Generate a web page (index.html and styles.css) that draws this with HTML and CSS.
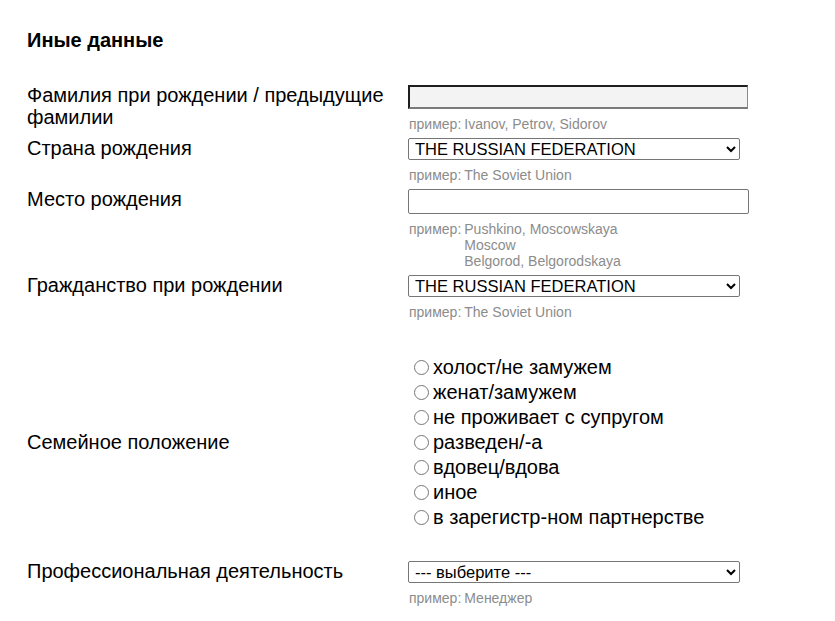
FILE: index.html
```html
<!DOCTYPE html>
<html lang="ru">
<head>
<meta charset="utf-8">
<title>Иные данные</title>
<link rel="stylesheet" href="styles.css">
</head>
<body>
<div class="page">
  <h2 class="title">Иные данные</h2>
  <div class="form">
    <div class="label">Фамилия при рождении / предыдущие фамилии</div>
    <div class="field">
      <input class="text text-prev" type="text">
      <div class="hint"><span class="hint-key">пример:</span><span class="hint-val">Ivanov, Petrov, Sidorov</span></div>
    </div>

    <div class="label">Страна рождения</div>
    <div class="field">
      <select class="sel"><option>THE RUSSIAN FEDERATION</option></select>
      <div class="hint"><span class="hint-key">пример:</span><span class="hint-val">The Soviet Union</span></div>
    </div>

    <div class="label">Место рождения</div>
    <div class="field">
      <input class="text" type="text">
      <div class="hint"><span class="hint-key">пример:</span><span class="hint-val">Pushkino, Moscowskaya<br>Moscow<br>Belgorod, Belgorodskaya</span></div>
    </div>

    <div class="label">Гражданство при рождении</div>
    <div class="field">
      <select class="sel"><option>THE RUSSIAN FEDERATION</option></select>
      <div class="hint"><span class="hint-key">пример:</span><span class="hint-val">The Soviet Union</span></div>
    </div>

    <div class="label label-mid">Семейное положение</div>
    <div class="field field-radios">
      <label class="opt"><input type="radio" name="fam"><span>холост/не замужем</span></label>
      <label class="opt"><input type="radio" name="fam"><span>женат/замужем</span></label>
      <label class="opt"><input type="radio" name="fam"><span>не проживает с супругом</span></label>
      <label class="opt"><input type="radio" name="fam"><span>разведен/-а</span></label>
      <label class="opt"><input type="radio" name="fam"><span>вдовец/вдова</span></label>
      <label class="opt"><input type="radio" name="fam"><span>иное</span></label>
      <label class="opt"><input type="radio" name="fam"><span>в зарегистр-ном партнерстве</span></label>
    </div>

    <div class="label">Профессиональная деятельность</div>
    <div class="field">
      <select class="sel"><option>--- выберите ---</option></select>
      <div class="hint"><span class="hint-key">пример:</span><span class="hint-val">Менеджер</span></div>
    </div>
  </div>
</div>
</body>
</html>
```
FILE: styles.css
```css
html, body {
  margin: 0;
  padding: 0;
  background: #fff;
}
body {
  font-family: "Liberation Sans", Arial, sans-serif;
  color: #000;
}
.page {
  padding: 29px 0 0 27px;
}
.title {
  margin: 0;
  font-size: 20px;
  font-weight: bold;
  line-height: 22px;
}
.form {
  margin-top: 33px;
  display: grid;
  grid-template-columns: 381px 400px;
  row-gap: 5px;
  align-items: baseline;
}
.label {
  font-size: 20px;
  line-height: 22px;
  padding-right: 20px;
}
.label-mid {
  align-self: center;
  padding-top: 4px;
}
.field {
  display: flex;
  flex-direction: column;
  align-items: flex-start;
}
.text {
  box-sizing: border-box;
  width: 341px;
  height: 25px;
  margin: 0;
  border: 1px solid #767676;
  border-radius: 2px;
  background: #fff;
  font-family: inherit;
  font-size: 16px;
  padding: 1px 4px;
}
.text-prev {
  width: 340px;
  height: 24px;
  border-radius: 0;
  background: #f3f3f3;
  border-width: 2px 1px 2px 2px;
  border-color: #1e1e1e #8a8a8a #7a7a7a #1e1e1e;
}
.sel {
  box-sizing: border-box;
  width: 332px;
  height: 22px;
  margin: 0;
  font-family: "Liberation Sans", Arial, sans-serif;
  font-size: 16.5px;
  color: #000;
  border: 1px solid #767676;
  border-radius: 2px;
  background: #fff;
  padding: 0 2px;
}
.hint {
  display: flex;
  margin-top: 7px;
  margin-left: 1px;
  font-size: 14px;
  line-height: 16px;
  color: #8c8c8c;
}
.hint-key {
  margin-right: 3px;
}
.field-radios {
  padding: 30px 0 25px;
}
.opt {
  display: flex;
  align-items: center;
  height: 25px;
  font-size: 20px;
  line-height: 22px;
}
.opt input {
  width: 15px;
  height: 15px;
  margin: 0 4px 0 6px;
}
```
